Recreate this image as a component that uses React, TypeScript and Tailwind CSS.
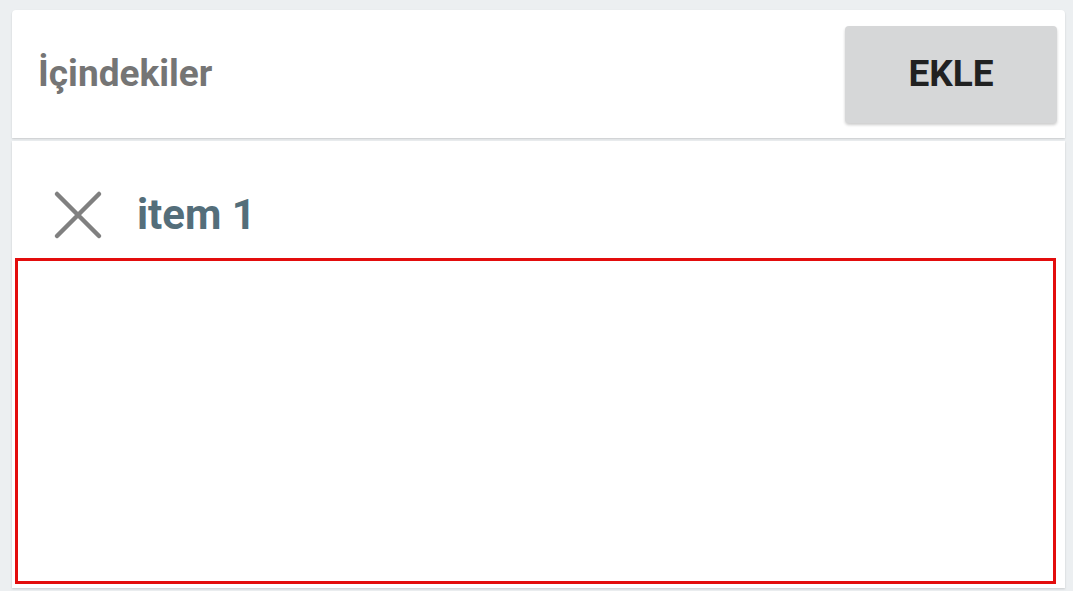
export default function App() {
    return (
        <div
            className="h-[591px] w-[1073px] overflow-hidden bg-[#eceff1] pl-[12px] pr-[8px] pt-[10px]"
            style={{ fontFamily: "Roboto, 'Noto Sans', sans-serif" }}
        >
            {/* Header */}
            <div className="flex h-[128px] items-center justify-between rounded-t-[4px] bg-white pl-[26px] pr-[8px] shadow-[0_1px_2px_rgba(0,0,0,0.15)]">
                <h1 className="text-[37px] font-bold text-[#757575]">İçindekiler</h1>
                <button className="flex h-[97px] w-[212px] items-center justify-center rounded-[4px] bg-[#d6d7d8] text-[37px] font-bold text-[#212121] shadow-[0_2px_3px_rgba(0,0,0,0.2)]">
                    EKLE
                </button>
            </div>

            {/* Content */}
            <div className="mt-[3px] flex h-[447px] flex-col bg-white pl-[3px] pr-[9px] shadow-[0_1px_2px_rgba(0,0,0,0.15)]">
                <div className="flex h-[117px] items-center gap-[34px] pl-[38px] pt-[30px]">
                    <svg width="50" height="50" viewBox="0 0 50 50" className="text-[#808080]">
                        <path d="M4 4 L46 46 M46 4 L4 46" stroke="currentColor" strokeWidth="4.5" strokeLinecap="round" />
                    </svg>
                    <span className="text-[42px] font-bold text-[#546e7a]">item 1</span>
                </div>
                <div className="h-[326px] border-[3px] border-[#e30d0d]" />
            </div>
        </div>
    );
}
